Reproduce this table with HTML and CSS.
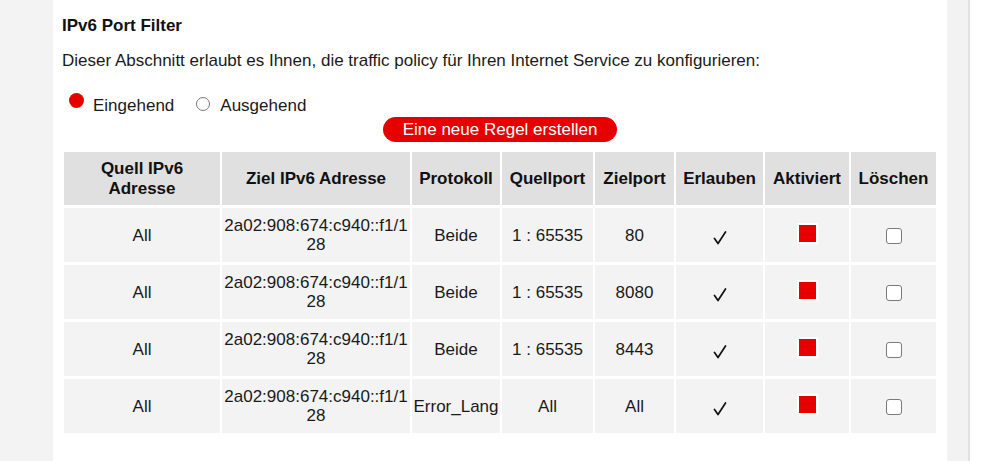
FILE: index.html
```html
<!DOCTYPE html>
<html lang="de">
<head>
<meta charset="utf-8">
<title>IPv6 Port Filter</title>
<link rel="stylesheet" href="styles.css">
</head>
<body>
<div class="page">
  <aside class="left-gutter"></aside>
  <main class="panel">
    <h2 class="title">IPv6 Port Filter</h2>
    <p class="intro">Dieser Abschnitt erlaubt es Ihnen, die traffic policy für Ihren Internet Service zu konfigurieren:</p>
    <div class="direction">
      <label class="opt"><span class="radio radio-on"></span>Eingehend</label>
      <label class="opt"><span class="radio"></span>Ausgehend</label>
    </div>
    <div class="btn-row"><button class="btn-new" type="button">Eine neue Regel erstellen</button></div>
    <table class="rules">
      <colgroup>
        <col class="c1"><col class="c2"><col class="c3"><col class="c4"><col class="c5"><col class="c6"><col class="c7"><col class="c8">
      </colgroup>
      <thead>
        <tr>
          <th class="wrap">Quell IPv6 Adresse</th>
          <th>Ziel IPv6 Adresse</th>
          <th>Protokoll</th>
          <th>Quellport</th>
          <th>Zielport</th>
          <th>Erlauben</th>
          <th>Aktiviert</th>
          <th>Löschen</th>
        </tr>
      </thead>
      <tbody>
        <tr>
          <td>All</td><td class="addr">2a02:908:674:c940::f1/128</td><td>Beide</td><td>1 : 65535</td><td>80</td>
          <td><svg class="check" viewBox="0 0 14 14" width="14" height="14"><path d="M1.5 7.5 L5 12.5 L12.5 1" fill="none" stroke="#111" stroke-width="1.7" stroke-linecap="round" stroke-linejoin="round"/></svg></td>
          <td><span class="active"></span></td><td><span class="box"></span></td>
        </tr>
        <tr>
          <td>All</td><td class="addr">2a02:908:674:c940::f1/128</td><td>Beide</td><td>1 : 65535</td><td>8080</td>
          <td><svg class="check" viewBox="0 0 14 14" width="14" height="14"><path d="M1.5 7.5 L5 12.5 L12.5 1" fill="none" stroke="#111" stroke-width="1.7" stroke-linecap="round" stroke-linejoin="round"/></svg></td>
          <td><span class="active"></span></td><td><span class="box"></span></td>
        </tr>
        <tr>
          <td>All</td><td class="addr">2a02:908:674:c940::f1/128</td><td>Beide</td><td>1 : 65535</td><td>8443</td>
          <td><svg class="check" viewBox="0 0 14 14" width="14" height="14"><path d="M1.5 7.5 L5 12.5 L12.5 1" fill="none" stroke="#111" stroke-width="1.7" stroke-linecap="round" stroke-linejoin="round"/></svg></td>
          <td><span class="active"></span></td><td><span class="box"></span></td>
        </tr>
        <tr>
          <td>All</td><td class="addr">2a02:908:674:c940::f1/128</td><td class="tight">Error_Lang</td><td>All</td><td>All</td>
          <td><svg class="check" viewBox="0 0 14 14" width="14" height="14"><path d="M1.5 7.5 L5 12.5 L12.5 1" fill="none" stroke="#111" stroke-width="1.7" stroke-linecap="round" stroke-linejoin="round"/></svg></td>
          <td><span class="active"></span></td><td><span class="box"></span></td>
        </tr>
      </tbody>
    </table>
  </main>
  <div class="strip"></div>
  <div class="outside"></div>
</div>
</body>
</html>
```

FILE: styles.css
```css
* { box-sizing: border-box; }
html, body { margin: 0; padding: 0; height: 100%; }
body {
  font-family: "Liberation Sans", Arial, sans-serif;
  color: #1a1a1a;
  background: #fff;
}
.page {
  display: flex;
  height: 461px;
  overflow: hidden;
}
.left-gutter {
  width: 53px;
  flex: none;
  background: #f3f3f3;
}
.panel {
  width: 894px;
  flex: none;
  background: #fff;
  padding: 15px 0 0 9px;
}
.strip {
  width: 23px;
  flex: none;
  background: #f2f2f2;
  border-right: 2px solid #e2e2e2;
}
.outside { flex: 1; background: #fff; }

.title {
  margin: 0;
  font-size: 17px;
  font-weight: bold;
  line-height: 22px;
  color: #111;
}
.intro {
  margin: 14px 0 0;
  font-size: 17px;
  line-height: 20px;
}
.direction {
  display: flex;
  gap: 22px;
  margin-top: 25px;
  padding-left: 7px;
  font-size: 17px;
  line-height: 20px;
}
.opt { display: flex; align-items: flex-start; }
.radio {
  width: 14px;
  height: 14px;
  border-radius: 50%;
  border: 1px solid #767676;
  background: #fff;
  margin: 1px 10px 0 0;
}
.radio-on {
  width: 15px;
  height: 15px;
  border: none;
  background: #e60000;
  margin: -3px 9px 0 0;
}
.btn-row {
  display: flex;
  justify-content: center;
  margin-top: 1px;
  padding-right: 9px;
}
.btn-new {
  width: 234px;
  height: 25px;
  border: none;
  border-radius: 13px;
  background: #e60000;
  color: #fff;
  font-family: "Liberation Sans", Arial, sans-serif;
  font-size: 17px;
  padding: 0;
  line-height: 25px;
}
.rules {
  margin: 7px 0 0 0;
  border-collapse: separate;
  border-spacing: 2px 3px;
  table-layout: fixed;
  width: 876px;
}
.c1 { width: 156px; }
.c2 { width: 188px; }
.c3 { width: 88px; }
.c4 { width: 91px; }
.c5 { width: 79px; }
.c6 { width: 87px; }
.c7 { width: 84px; }
.c8 { width: 85px; }
.rules th, .rules td {
  padding: 0 1px;
  text-align: center;
  vertical-align: middle;
  font-size: 17px;
  line-height: 19px;
}
.rules th {
  height: 53px;
  background: #e0e0e0;
  font-weight: bold;
  color: #111;
  line-height: 20px;
}
.rules th.wrap { padding: 0 28px; }
.rules td {
  height: 54px;
  background: #f3f3f3;
}
.rules td.addr { word-break: break-all; }
.rules td.tight { padding: 0; }
.check {
  display: inline-block;
  vertical-align: middle;
  margin-top: 6px;
}
.active {
  display: inline-block;
  width: 21px;
  height: 21px;
  background: #e60000;
  border: 2.5px solid #fff;
  vertical-align: middle;
  margin-top: -5px;
}
.box {
  display: inline-block;
  width: 16px;
  height: 16px;
  border: 1.5px solid #7a7a7a;
  border-radius: 3px;
  background: #fff;
  vertical-align: middle;
}
```
